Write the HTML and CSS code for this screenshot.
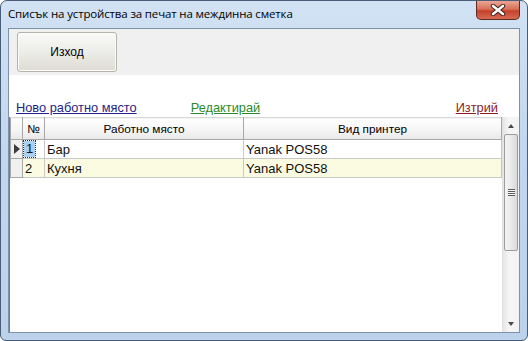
FILE: index.html
```html
<!DOCTYPE html>
<html lang="bg">
<head>
  <meta charset="UTF-8" />
  <title>Списък на устройства за печат на междинна сметка</title>
  <link rel="stylesheet" href="styles.css">
</head>
<body>
  <div class="window">
    <div class="titlebar">
      <span class="title">Списък на устройства за печат на междинна сметка</span>
      <button class="close" title="Затвори">
        <svg width="16" height="12" viewBox="0 0 16 12">
          <path d="M3 2 L13 10 M13 2 L3 10" stroke="#3a1a14" stroke-width="4.4" stroke-linecap="round" />
          <path d="M3 2 L13 10 M13 2 L3 10" stroke="#ffffff" stroke-width="2.6" stroke-linecap="round" />
        </svg>
      </button>
    </div>

    <div class="client">
      <div class="toolbar">
        <button class="btn">Изход</button>
      </div>

      <div class="content">
        <div class="links">
          <a href="#" class="link-new">Ново работно място</a>
          <a href="#" class="link-edit">Редактирай</a>
          <a href="#" class="link-del">Изтрий</a>
        </div>

        <div class="grid">
          <div class="grid-body">
            <table>
              <thead>
                <tr>
                  <th class="rowhead"></th>
                  <th class="col-no">№</th>
                  <th class="col-place">Работно място</th>
                  <th class="col-printer">Вид принтер</th>
                </tr>
              </thead>
              <tbody>
                <tr>
                  <td class="rowhead"><span class="arrow"></span></td>
                  <td class="col-no"><span class="selected">1</span></td>
                  <td>Бар</td>
                  <td>Yanak POS58</td>
                </tr>
                <tr class="alt">
                  <td class="rowhead"></td>
                  <td class="col-no">2</td>
                  <td>Кухня</td>
                  <td>Yanak POS58</td>
                </tr>
              </tbody>
            </table>
          </div>

          <div class="scrollbar">
            <span class="sb-arrow up"></span>
            <div class="sb-track">
              <div class="sb-thumb">
                <span class="grip"></span>
              </div>
            </div>
            <span class="sb-arrow down"></span>
          </div>
        </div>
      </div>
    </div>
  </div>
</body>
</html>
```

FILE: styles.css
```css
* { box-sizing: border-box; margin: 0; padding: 0; }
body {
  font-family: "Liberation Sans", Arial, sans-serif;
  background: #ffffff;
  color: #000;
}
.window {
  width: 528px;
  height: 341px;
  border: 1px solid #4a5d78;
  border-radius: 7px 7px 6px 6px;
  padding: 0 7px 7px 7px;
  background: linear-gradient(to bottom, #d2e2f4 0%, #c3d7ee 40%, #bcd2eb 100%);
  display: flex;
  flex-direction: column;
}
.titlebar {
  height: 27px;
  display: flex;
  align-items: flex-start;
}
.title {
  font-family: "Open Sans", "Liberation Sans", sans-serif;
  font-size: 11.5px;
  color: #000;
  margin-top: 5px;
  letter-spacing: -0.15px;
}
.close {
  margin-left: auto;
  width: 44px;
  height: 19px;
  border: 1px solid #5d2a20;
  border-top: none;
  border-radius: 0 0 5px 5px;
  background: linear-gradient(to bottom, #eaa593 0%, #d9705a 45%, #c5412b 55%, #d66a52 100%);
  display: flex;
  align-items: center;
  justify-content: center;
}
.client {
  flex: 1;
  border: 1px solid #7d92ac;
  display: flex;
  flex-direction: column;
  background: #fff;
}
.toolbar {
  height: 46px;
  background: #f0f0f0;
  padding: 3px 0 0 8px;
}
.btn {
  width: 100px;
  height: 40px;
  border: 1px solid #b4b4ac;
  border-radius: 3px;
  background: linear-gradient(to bottom, #fafaf8 0%, #ededea 45%, #dedcd3 100%);
  font-family: "Liberation Sans", Arial, sans-serif;
  font-size: 12px;
  color: #000;
  box-shadow: inset 0 0 0 1px #fbfbf9;
}
.content {
  flex: 1;
  display: flex;
  flex-direction: column;
}
.links {
  height: 42px;
  display: flex;
  align-items: flex-end;
  padding: 0 21px 2px 7px;
  font-size: 12.8px;
}
.links a { line-height: 15px; }
.link-new { color: #1f1f86; }
.link-edit { color: #2a8a2a; margin-left: 54px; }
.link-del { color: #8e1c1c; margin-left: auto; }

.grid {
  flex: 1;
  display: flex;
  border-left: 1px solid #7a7a7a;
}
.grid-body {
  flex: 1;
  background: #fff;
}
table {
  width: 100%;
  border-collapse: collapse;
  table-layout: fixed;
}
th {
  height: 22px;
  font-weight: normal;
  font-size: 11.8px;
  background: linear-gradient(to bottom, #ffffff 0%, #f4f4f4 60%, #e8e8e8 100%);
  border: 1px solid #a8a8a8;
  border-top: 1px solid #d8d8d8;
  text-align: center;
}
td {
  height: 19px;
  font-size: 13px;
  font-weight: normal;
  color: #111;
  border: 1px solid #c8c8c8;
  padding: 0 2px;
  white-space: nowrap;
}
tr.alt td { background: #fbfbe2; }
.rowhead { width: 12px; }
td.rowhead {
  background: #f0f0f0 !important;
  border-color: #a8a8a8;
  padding: 0;
}
.col-no { width: 22px; }
.col-place { width: 199px; }
.arrow {
  display: block;
  width: 0;
  height: 0;
  margin-left: 3px;
  border-top: 5px solid transparent;
  border-bottom: 5px solid transparent;
  border-left: 6px solid #3c3c3c;
}
.selected {
  display: inline-block;
  padding: 0 2px;
  margin-left: -1px;
  background: #a9d0f3;
  outline: 1px dotted #333;
  line-height: 16px;
}

.scrollbar {
  width: 17px;
  display: flex;
  flex-direction: column;
  align-items: center;
  background: linear-gradient(to right, #e6e6e6, #f6f6f6 40%, #f2f2f2);
  border-left: 1px solid #e0e0e0;
}
.sb-arrow {
  width: 0;
  height: 0;
  border-left: 3px solid transparent;
  border-right: 3px solid transparent;
  margin: 7px 0 6px;
}
.sb-arrow.up { border-bottom: 4px solid #4a4a4a; }
.sb-arrow.down { border-top: 4px solid #4a4a4a; margin: 5px 0 6px; }
.sb-track {
  flex: 1;
  width: 100%;
  padding: 0 1px;
}
.sb-thumb {
  height: 117px;
  border: 1px solid #9c9c9c;
  border-radius: 2px;
  background: linear-gradient(to right, #f4f4f4, #e9e9e9 50%, #d9d9d9);
  display: flex;
  align-items: center;
  justify-content: center;
}
.grip {
  width: 7px;
  height: 7px;
  background: repeating-linear-gradient(to bottom, #5a5a5a 0 1px, #f8f8f8 1px 2px);
}
```
